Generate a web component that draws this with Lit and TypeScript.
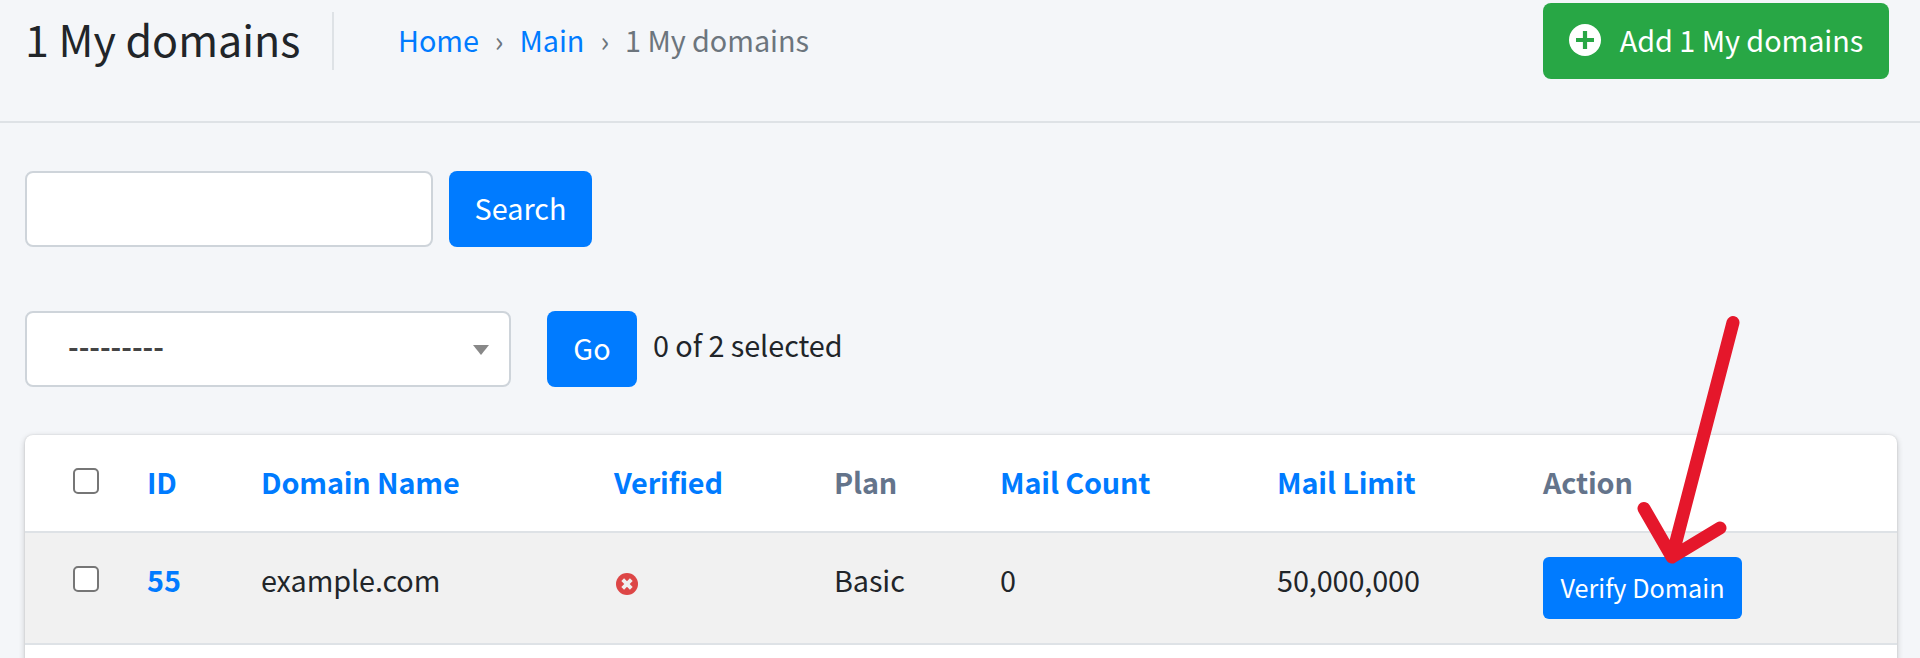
import { LitElement, html, css, svg } from "lit";
import { customElement, state } from "lit/decorators.js";

interface DomainRow {
  id: number;
  name: string;
  plan: string;
  count: string;
  limit: string;
}

const plusCircle = svg`<svg class="plus" viewBox="0 0 32 32"><circle cx="16" cy="16" r="16" fill="#fff"/><path d="M16 7v18M7 16h18" stroke="#28a745" stroke-width="4.2" fill="none"/></svg>`;

const crossCircle = svg`<svg class="cross" viewBox="0 0 22 22"><circle cx="11" cy="11" r="11" fill="#dd4646"/><path d="M6.7 6.7l8.6 8.6M15.3 6.7l-8.6 8.6" stroke="#efefef" stroke-width="3.9" fill="none"/></svg>`;

@customElement("app-root")
export class AppRoot extends LitElement {
  @state() private rows: DomainRow[] = [
    { id: 55, name: "example.com", plan: "Basic", count: "0", limit: "50,000,000" },
  ];

  static styles = css`
    :host {
      display: block;
      position: relative;
      box-sizing: border-box;
      height: 658px;
      overflow: hidden;
      background: #f4f6f9;
      color: #212529;
      font-family: "Source Sans Pro", "Noto Sans CJK SC", sans-serif;
      font-size: 28.8px;
      line-height: 48px;
    }
    * { box-sizing: border-box; }
    a { color: #007bff; text-decoration: none; }
    header {
      display: flex;
      align-items: flex-start;
      height: 123px;
      padding: 3px 31px 0 25px;
      border-bottom: 2px solid #dee2e6;
    }
    h1 {
      margin: 9px 0 0;
      width: 309px;
      height: 58px;
      border-right: 2px solid #dee2e6;
      font-size: 43px;
      font-weight: 400;
      line-height: 53px;
      white-space: nowrap;
    }
    .crumbs {
      display: flex;
      flex: 1;
      gap: 16px;
      margin: 13px 0 0 64px;
      color: #6c757d;
      letter-spacing: -0.05px;
    }
    .btn {
      display: flex;
      justify-content: center;
      height: 76px;
      padding: 13px 0 0;
      border: 0;
      border-radius: 8px;
      background: #007bff;
      color: #fff;
      font: inherit;
      white-space: nowrap;
    }
    .add {
      width: 346px;
      gap: 19px;
      background: #28a745;
      letter-spacing: -0.05px;
    }
    .plus { width: 32px; height: 32px; margin-top: 8px; }
    .search {
      display: flex;
      gap: 16px;
      padding: 48px 25px 0;
    }
    input[type="text"] {
      width: 408px;
      height: 76px;
      margin: 0;
      border: 2px solid #ced4da;
      border-radius: 8px;
      background: #fff;
    }
    .find { width: 143px; }
    .actions { display: flex; padding: 64px 25px 0; }
    .select {
      display: flex;
      justify-content: space-between;
      width: 486px;
      height: 76px;
      padding: 9px 20px 0 41px;
      border: 2px solid #ced4da;
      border-radius: 8px;
      background: #fff;
      color: #444;
      font-weight: 700;
    }
    .caret {
      width: 16px;
      height: 10px;
      margin-top: 23px;
      background: #888;
      clip-path: polygon(0 0, 100% 0, 50% 100%);
    }
    .go { width: 90px; margin-left: 36px; }
    .count { margin: 10px 0 0 16px; letter-spacing: -0.05px; }
    .card {
      margin: 48px 23px 0 25px;
      height: 260px;
      border-radius: 8px;
      background: #fff;
      box-shadow: 0 0 2px rgba(0, 0, 0, 0.125), 0 2px 6px rgba(0, 0, 0, 0.2);
    }
    .row {
      display: grid;
      grid-template-columns: 122px 114px 353px 220px 166px 277px 266px 1fr;
      align-items: start;
      border-bottom: 2px solid #dee2e6;
    }
    .head {
      height: 98px;
      padding-top: 23px;
      color: #64748b;
      font-weight: 700;
      letter-spacing: -0.15px;
    }
    .data { height: 112px; padding-top: 23px; background: #f1f1f1; letter-spacing: -0.1px; }
    .id { font-weight: 700; }
    input[type="checkbox"] {
      appearance: none;
      width: 26px;
      height: 26px;
      margin: 10px 0 0 48px;
      border: 2px solid #767676;
      border-radius: 5px;
      background: #fff;
    }
    .cross { width: 22px; height: 22px; margin: 17px 0 0 2px; }
    .verify {
      width: 199px;
      height: 62px;
      margin-top: 1px;
      padding-top: 6px;
      border-radius: 6px;
      font-size: 25.2px;
      letter-spacing: 0;
    }
    .pointer {
      position: absolute;
      left: 1620px;
      top: 300px;
      width: 130px;
      height: 280px;
      pointer-events: none;
    }
  `;

  render() {
    return html`
      <header>
        <h1>1 My domains</h1>
        <nav class="crumbs">
          <a href="#">Home</a><span>›</span><a href="#">Main</a><span>›</span><span>1 My domains</span>
        </nav>
        <button class="btn add">${plusCircle}<span>Add 1 My domains</span></button>
      </header>
      <div class="search">
        <input type="text" aria-label="Search" />
        <button class="btn find">Search</button>
      </div>
      <div class="actions">
        <div class="select"><span>---------</span><span class="caret"></span></div>
        <button class="btn go">Go</button>
        <span class="count">0 of 2 selected</span>
      </div>
      <section class="card">
        <div class="row head">
          <input type="checkbox" aria-label="Select all" />
          <a href="#">ID</a><a href="#">Domain Name</a><a href="#">Verified</a>
          <span>Plan</span><a href="#">Mail Count</a><a href="#">Mail Limit</a><span>Action</span>
        </div>
        ${this.rows.map(
          (r) => html`<div class="row data">
            <input type="checkbox" aria-label="Select row" />
            <a class="id" href="#">${r.id}</a>
            <span>${r.name}</span>
            ${crossCircle}
            <span>${r.plan}</span>
            <span>${r.count}</span>
            <span>${r.limit}</span>
            <button class="btn verify">Verify Domain</button>
          </div>`
        )}
      </section>
      <svg class="pointer" viewBox="1620 300 130 280">
        <path d="M1733 322.5L1672 557M1644 508.5L1672 557L1720 528" fill="none" stroke="#e5172b" stroke-width="13" stroke-linecap="round" stroke-linejoin="round" />
      </svg>
    `;
  }
}
